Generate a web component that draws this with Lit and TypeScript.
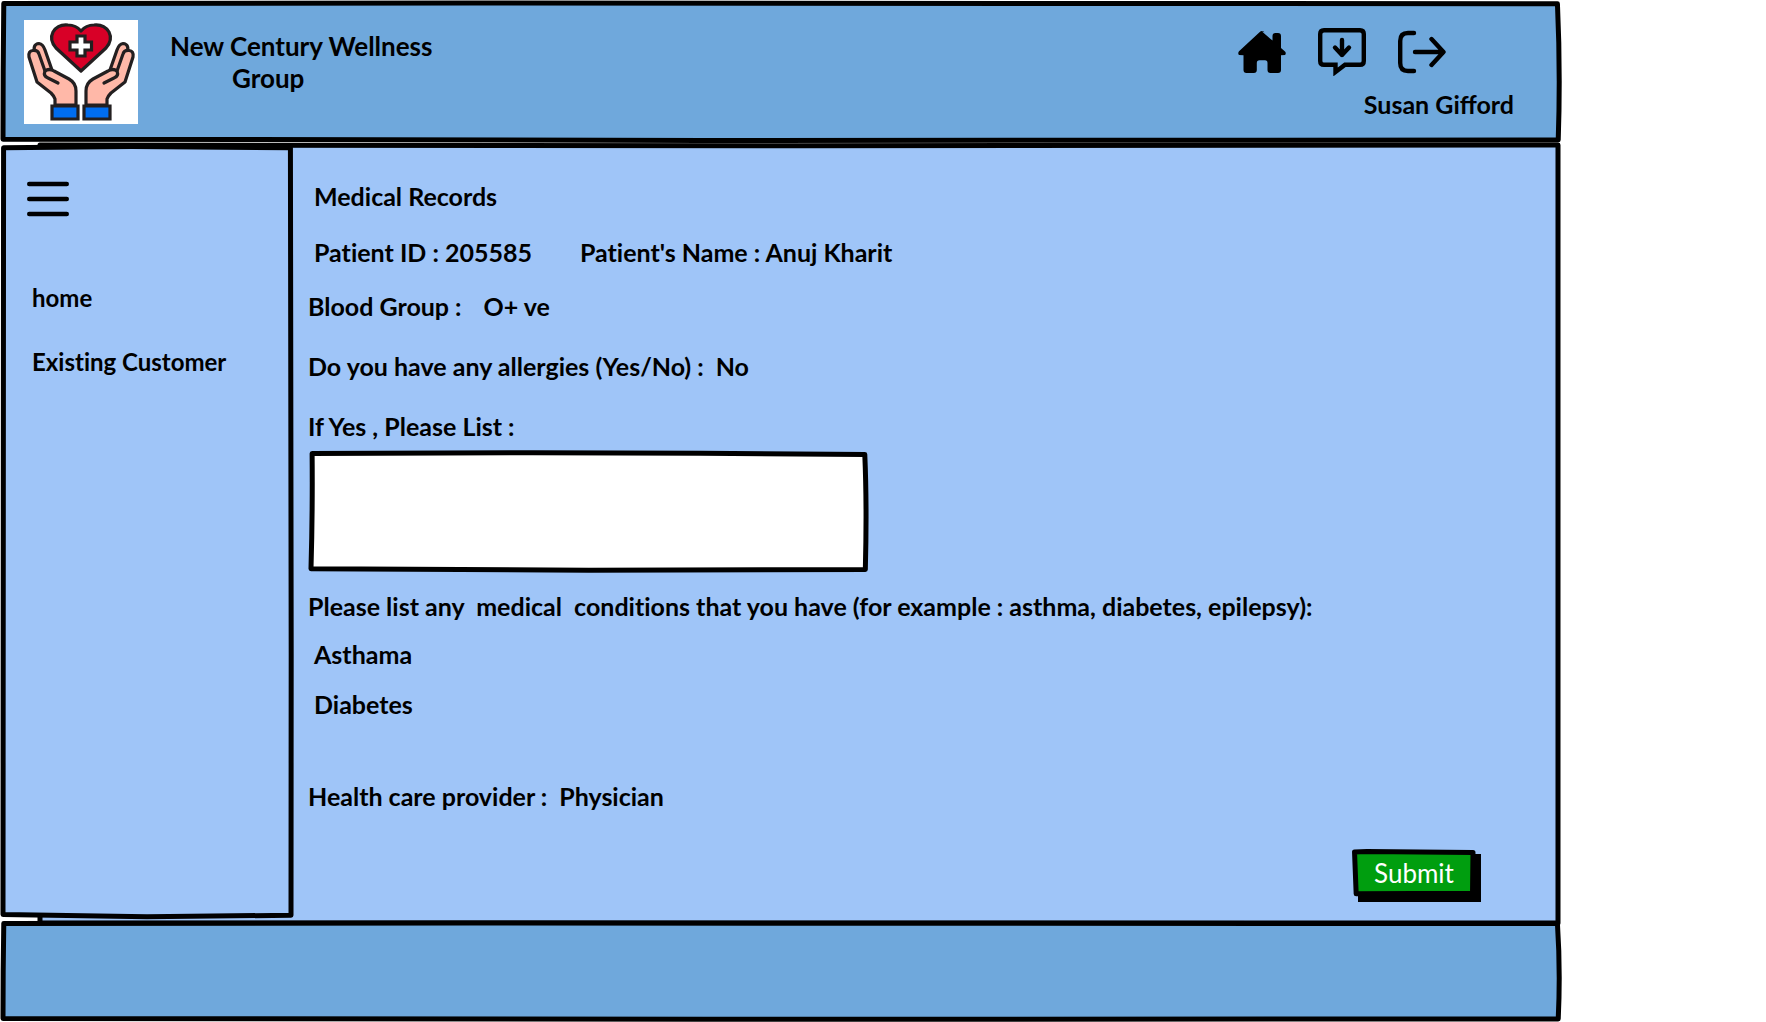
import { LitElement, html, svg, css } from "lit";
import { customElement, property } from "lit/decorators.js";

/* Hand-inked outlines, in percent of the panel that they surround. */
const OUTLINES: Record<string, string> = {
  bar: "M0.05 0.4 L30 0 L99.9 0.6 Q100.1 50 99.95 100 L45 100.3 L0 99.4 Q0 50 0.05 0.4Z",
  side: "M0.2 0.1 L45 -0.05 L99.8 0.1 Q100.2 50 100 99.9 L50 100.1 L0 99.8 Q0.4 50 0.2 0.1Z",
  page: "M0 0 L50 0.1 L100 0 L100 100 L0 100Z",
  box: "M0.2 0.5 L40 -0.2 L70 0.2 L99.6 1.2 Q100 45 99.7 100.4 L50 101 L0 99.8 Q0.3 50 0.2 0.5Z",
  button: "M-0.4 0 L10 -1 L100 1 L99.6 98 L50 99 L1 99.5Z",
};

@customElement("ink-frame")
export class InkFrame extends LitElement {
  static styles = css`
    :host {
      position: absolute;
      inset: 3px;
      z-index: -1;
      pointer-events: none;
    }
    .ink {
      display: block;
      width: 100%;
      height: 100%;
      overflow: visible;
    }
    .line {
      fill: var(--fill, #fff);
      stroke: #000;
      stroke-width: 5px;
      stroke-linejoin: round;
      vector-effect: non-scaling-stroke;
    }
  `;

  @property() shape = "bar";

  render() {
    return html`<svg class="ink" viewBox="0 0 100 100" preserveAspectRatio="none" aria-hidden="true">
      <path class="line" d=${OUTLINES[this.shape]}></path>
    </svg>`;
  }
}

const homeIcon = svg`
  <path d="M24 3.5 L34.5 12.6 V8 Q34.5 5 37.5 5 H40 Q43 5 43 8 V20 L47 23.5 Q48.5 25.2 47 27 L43 27.3 V42 Q43 45 40 45 H32.5 Q29.5 45 29.5 42 V35 Q29.5 32.3 27 32.3 H21.5 Q18.8 32.3 18.8 35 V42 Q18.8 45 15.8 45 H8.5 Q5.5 45 5.5 42 V27.3 L1 27 Q-0.5 25.2 1 23.2 L21.5 4.2 Q24 1.8 26.5 4.2Z"/>`;

const inboxIcon = svg`
  <path class="stroke" d="M6 2.200 H42 Q45.800 2.200 45.800 6 V33 Q45.800 36.800 42 36.800 H27 L17.500 44 V36.800 H6 Q2.200 36.800 2.200 33 V6 Q2.200 2.200 6 2.200Z"/>
  <path class="stroke round" d="M24 12 V27 M17 19.5 L24 27 L31 19.5"/>`;

const exitIcon = svg`
  <path class="stroke round" d="M16 5 H10 Q2.200 5 2.200 13 V35 Q2.200 43 10 43 H16"/>
  <path class="stroke round" d="M17 24 H45 M33.5 11 L45.500 24 L33.5 37"/>`;

const logo = svg`
  <defs>
    <g id="hand">
      <path class="skin" d="M11 34 Q8 24 15 23.500 Q19 24 21 30 L28 50 Q22 49 21 54Z"/>
      <path class="skin" d="M31 85 V79 Q30 76 27 73 L13 62 L5 37 Q4 31 9 30.500 Q14 30 15 34 L21 51 Q25 48 30 51 L45 59 Q52 63 52 71 V85Z"/>
      <path class="ink" d="M21 51 Q19 56 24 58 L34 63"/>
      <path class="cuff" d="M28 86 H54 V99 H28Z"/>
    </g>
  </defs>
  <use href="#hand"/>
  <use href="#hand" transform="translate(114 0) scale(-1 1)"/>
  <path class="heart" d="M57 51 L32 28 Q25 20 29 12 Q34 4 44 5 Q52 5 57 11 Q62 5 70 5 Q80 4 85 12 Q89 20 82 28Z"/>
  <path class="cross" d="M53 16 H61 V22 H67.500 V30 H61 V36 H53 V30 H46 V22 H53Z"/>`;

@customElement("app-root")
export class AppRoot extends LitElement {
  static styles = css`
    :host {
      display: flex;
      flex-direction: column;
      box-sizing: border-box;
      max-width: 1562px;
      min-height: 100vh;
      color: #000;
      font: 700 24px/32px Lato, "Open Sans", sans-serif;
    }
    * {
      box-sizing: border-box;
    }
    .bar,
    .middle,
    .side,
    .box,
    .submit {
      position: relative;
      z-index: 0;
    }
    .bar {
      --fill: #6fa8dc;
      display: flex;
      align-items: flex-start;
    }
    .top {
      min-height: 143px;
      padding: 20px 48px 16px 24px;
    }
    .foot {
      min-height: 102px;
    }
    .logo {
      width: 114px;
      height: 104px;
      background: #fff;
      flex: none;
    }
    .skin {
      fill: #ffb8a8;
    }
    .skin,
    .ink,
    .cuff,
    .heart,
    .cross {
      stroke: #231f20;
      stroke-width: 3.2;
      stroke-linejoin: round;
      stroke-linecap: round;
    }
    .ink {
      fill: none;
    }
    .cuff {
      fill: #006df0;
      stroke-linejoin: miter;
    }
    .heart {
      fill: #d80027;
    }
    .cross {
      fill: #fff;
      stroke-linejoin: miter;
    }
    .brand {
      margin: 10px 0 0 32px;
      font: inherit;
      font-size: 26px;
    }
    .brand-end {
      display: block;
      padding-left: 62px;
    }
    .account {
      display: flex;
      flex-direction: column;
      align-items: flex-end;
      gap: 12px;
      margin: 8px 0 0 auto;
      font-size: 25px;
    }
    .actions {
      display: flex;
      gap: 32px;
      margin-right: 68px;
    }
    .action,
    .link {
      color: inherit;
      text-decoration: none;
    }
    .icon {
      display: block;
      width: 48px;
      height: 48px;
    }
    .stroke {
      fill: none;
      stroke: #000;
      stroke-width: 4.4;
    }
    .round {
      stroke-linecap: round;
      stroke-linejoin: round;
    }
    .middle {
      display: flex;
      flex: 1;
      margin-bottom: -3px;
      font-variant-ligatures: none;
    }
    .page-frame {
      --fill: #9fc5f8;
      inset: 2px 4px 0 40px;
    }
    .side {
      --fill: #9fc5f8;
      flex: none;
      width: 294px;
      margin: 1px 0 4px;
      padding: 37px 27px;
    }
    .burger {
      display: block;
      padding: 0;
      border: 0;
      background: none;
    }
    .lines {
      display: block;
      width: 42px;
      height: 36px;
    }
    .links {
      display: flex;
      flex-direction: column;
      gap: 32px;
      margin: 65px 0 0;
      padding: 0 0 0 5px;
      list-style: none;
    }
    .record {
      flex: 1;
      min-width: 0;
      padding: 37px 86px 24px 14px;
      font-size: 25px;
      white-space: pre-wrap;
    }
    .title {
      margin: 0 0 24px;
      font: inherit;
    }
    .row {
      display: flex;
      margin: 0 0 22px;
    }
    .inset {
      padding-left: 6px;
    }
    .wide {
      gap: 48px;
    }
    .mid {
      gap: 22px;
    }
    .near {
      gap: 12px;
    }
    .loose {
      margin-bottom: 28px;
    }
    .prompt {
      display: block;
    }
    .box {
      max-width: 562px;
      height: 122px;
      margin: 8px 0 18px;
      padding: 5px;
    }
    .entry {
      display: block;
      width: 100%;
      height: 100%;
      padding: 8px;
      border: 0;
      outline: 0;
      resize: none;
      background: none;
      font: inherit;
    }
    .conditions {
      display: flex;
      flex-direction: column;
      gap: 18px;
      margin: 16px 0 60px;
      padding: 0 0 0 6px;
      list-style: none;
    }
    .submit {
      --fill: #009e0f;
      display: block;
      width: 124px;
      height: 48px;
      margin: 37px 0 0 auto;
      padding: 0;
      border: 0;
      background: none;
      color: #fff;
      font: 400 26px/48px Lato, "Open Sans", sans-serif;
    }
    .submit::before {
      content: "";
      position: absolute;
      inset: 5px -5px -5px 6px;
      z-index: -2;
      background: #000;
    }
  `;

  private action(name: string, href: string, icon: unknown) {
    return html`<a class="action" href=${href} aria-label=${name}
      ><svg class="icon" viewBox="0 0 48 48" aria-hidden="true">${icon}</svg></a
    >`;
  }

  render() {
    return html`
      <header class="bar top">
        <ink-frame shape="bar"></ink-frame>
        <svg class="logo" viewBox="0 0 114 104" aria-hidden="true">${logo}</svg>
        <h1 class="brand">New Century Wellness <span class="brand-end">Group</span></h1>
        <div class="account">
          <nav class="actions">
            ${this.action("Home", "#home", homeIcon)}
            ${this.action("Messages", "#messages", inboxIcon)}
            ${this.action("Sign out", "#sign-out", exitIcon)}
          </nav>
          <span>Susan Gifford</span>
        </div>
      </header>
      <div class="middle">
        <ink-frame class="page-frame" shape="page"></ink-frame>
        <aside class="side">
          <ink-frame shape="side"></ink-frame>
          <button class="burger" type="button" aria-label="Menu">
            <svg class="lines" viewBox="0 0 42 36" aria-hidden="true">
              <path class="stroke round" d="M2.2 3 H39.800 M2.2 18 H39.800 M2.2 33 H39.800" />
            </svg>
          </button>
          <ul class="links">
            <li><a class="link" href="#home">home</a></li>
            <li><a class="link" href="#existing">Existing Customer</a></li>
          </ul>
        </aside>
        <form class="record"><h2 class="title inset">Medical Records</h2><p class="row inset wide"><span>Patient ID : 205585</span><span>Patient's Name : Anuj Kharit</span></p><p class="row loose mid"><span>Blood Group :</span><span>O+ ve</span></p><p class="row loose near"><span>Do you have any allergies (Yes/No) :</span><span>No</span></p><label class="prompt" for="allergies">If Yes , Please List :</label><div class="box"><ink-frame shape="box"></ink-frame><textarea class="entry" id="allergies"></textarea></div><div>Please list any  medical  conditions that you have (for example : asthma, diabetes, epilepsy):</div><ul class="conditions"><li>Asthama</li><li>Diabetes</li></ul><div class="row near"><span>Health care provider :</span><span>Physician</span></div><button class="submit" type="submit"><ink-frame shape="button"></ink-frame>Submit</button></form>
      </div>
      <footer class="bar foot"><ink-frame shape="bar"></ink-frame></footer>
    `;
  }
}
